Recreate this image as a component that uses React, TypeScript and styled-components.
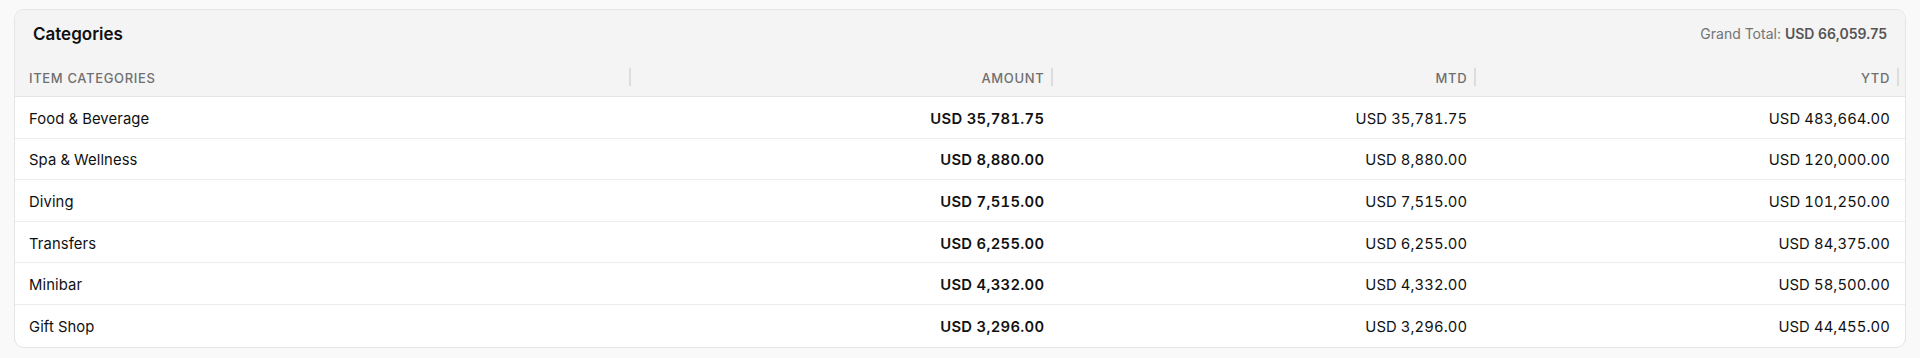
import React from 'react';
import styled, { createGlobalStyle } from 'styled-components';

interface CategoryRow {
  name: string;
  amount: string;
  mtd: string;
  ytd: string;
}

const rows: CategoryRow[] = [
  { name: 'Food & Beverage', amount: 'USD 35,781.75', mtd: 'USD 35,781.75', ytd: 'USD 483,664.00' },
  { name: 'Spa & Wellness', amount: 'USD 8,880.00', mtd: 'USD 8,880.00', ytd: 'USD 120,000.00' },
  { name: 'Diving', amount: 'USD 7,515.00', mtd: 'USD 7,515.00', ytd: 'USD 101,250.00' },
  { name: 'Transfers', amount: 'USD 6,255.00', mtd: 'USD 6,255.00', ytd: 'USD 84,375.00' },
  { name: 'Minibar', amount: 'USD 4,332.00', mtd: 'USD 4,332.00', ytd: 'USD 58,500.00' },
  { name: 'Gift Shop', amount: 'USD 3,296.00', mtd: 'USD 3,296.00', ytd: 'USD 44,455.00' },
];

const App: React.FC = () => {
  return (
    <>
      <GlobalStyle />
      <Page>
        <Card>
          <CardHeader>
            <Title>Categories</Title>
            <GrandTotal>
              Grand Total: <strong>USD 66,059.75</strong>
            </GrandTotal>
          </CardHeader>

          <Table>
            <HeadRow>
              <HeadCell>Item Categories</HeadCell>
              <HeadCell $right>Amount</HeadCell>
              <HeadCell $right>MTD</HeadCell>
              <HeadCell $right>YTD</HeadCell>
            </HeadRow>
            {rows.map((row, i) => (
              <BodyRow key={row.name} $last={i === rows.length - 1}>
                <Cell>{row.name}</Cell>
                <Cell $right $bold>{row.amount}</Cell>
                <Cell $right>{row.mtd}</Cell>
                <Cell $right>{row.ytd}</Cell>
              </BodyRow>
            ))}
          </Table>
        </Card>
      </Page>
    </>
  );
};

const GlobalStyle = createGlobalStyle`
  html, body {
    margin: 0;
    padding: 0;
    background: #f9f9f9;
  }
  body {
    font-family: Inter, "Noto Sans", sans-serif;
    color: #111;
    -webkit-font-smoothing: antialiased;
  }
`;

const Page = styled.div`
  padding: 9px 14px 11px;
`;

const Card = styled.div`
  background: #ffffff;
  border: 1px solid #e4e4e4;
  border-radius: 10px;
  overflow: hidden;
`;

const CardHeader = styled.div`
  height: 47px;
  display: flex;
  align-items: center;
  justify-content: space-between;
  padding: 0 18px 0 18px;
  background: #f4f4f4;
`;

const Title = styled.h2`
  margin: 0;
  font-size: 17px;
  font-weight: 600;
  color: #111;
`;

const GrandTotal = styled.div`
  font-size: 14px;
  color: #737373;

  strong {
    font-weight: 600;
    color: #555;
  }
`;

const Table = styled.div`
  display: flex;
  flex-direction: column;
`;

const HeadRow = styled.div`
  display: grid;
  grid-template-columns: 1.47fr 1fr 1fr 1fr;
  height: 40px;
  padding-top: 2px;
  background: #f4f4f4;
  border-bottom: 1px solid #e4e4e4;
  box-sizing: border-box;
`;

const HeadCell = styled.div<{ $right?: boolean }>`
  position: relative;
  display: flex;
  align-items: center;
  justify-content: ${(p) => (p.$right ? 'flex-end' : 'flex-start')};
  padding: 0 15px 0 14px;
  font-size: 13px;
  font-weight: 500;
  letter-spacing: 0.65px;
  text-transform: uppercase;
  color: #6f6f6f;

  &::after {
    content: '';
    position: absolute;
    right: 6px;
    top: 9px;
    bottom: 10px;
    width: 2px;
    background: #dcdcdc;
  }
`;

const BodyRow = styled.div<{ $last?: boolean }>`
  display: grid;
  grid-template-columns: 1.47fr 1fr 1fr 1fr;
  height: 41.6px;
  padding-top: 3px;
  box-sizing: border-box;
  border-bottom: ${(p) => (p.$last ? 'none' : '1px solid #ececec')};
`;

const Cell = styled.div<{ $right?: boolean; $bold?: boolean }>`
  display: flex;
  align-items: center;
  justify-content: ${(p) => (p.$right ? 'flex-end' : 'flex-start')};
  padding: 0 15px 0 14px;
  font-size: 14.8px;
  font-weight: ${(p) => (p.$bold ? 600 : 400)};
  font-variant-numeric: tabular-nums;
  letter-spacing: ${(p) => (p.$bold ? '0.3px' : '0.1px')};
  color: #111;
`;

export default App;
